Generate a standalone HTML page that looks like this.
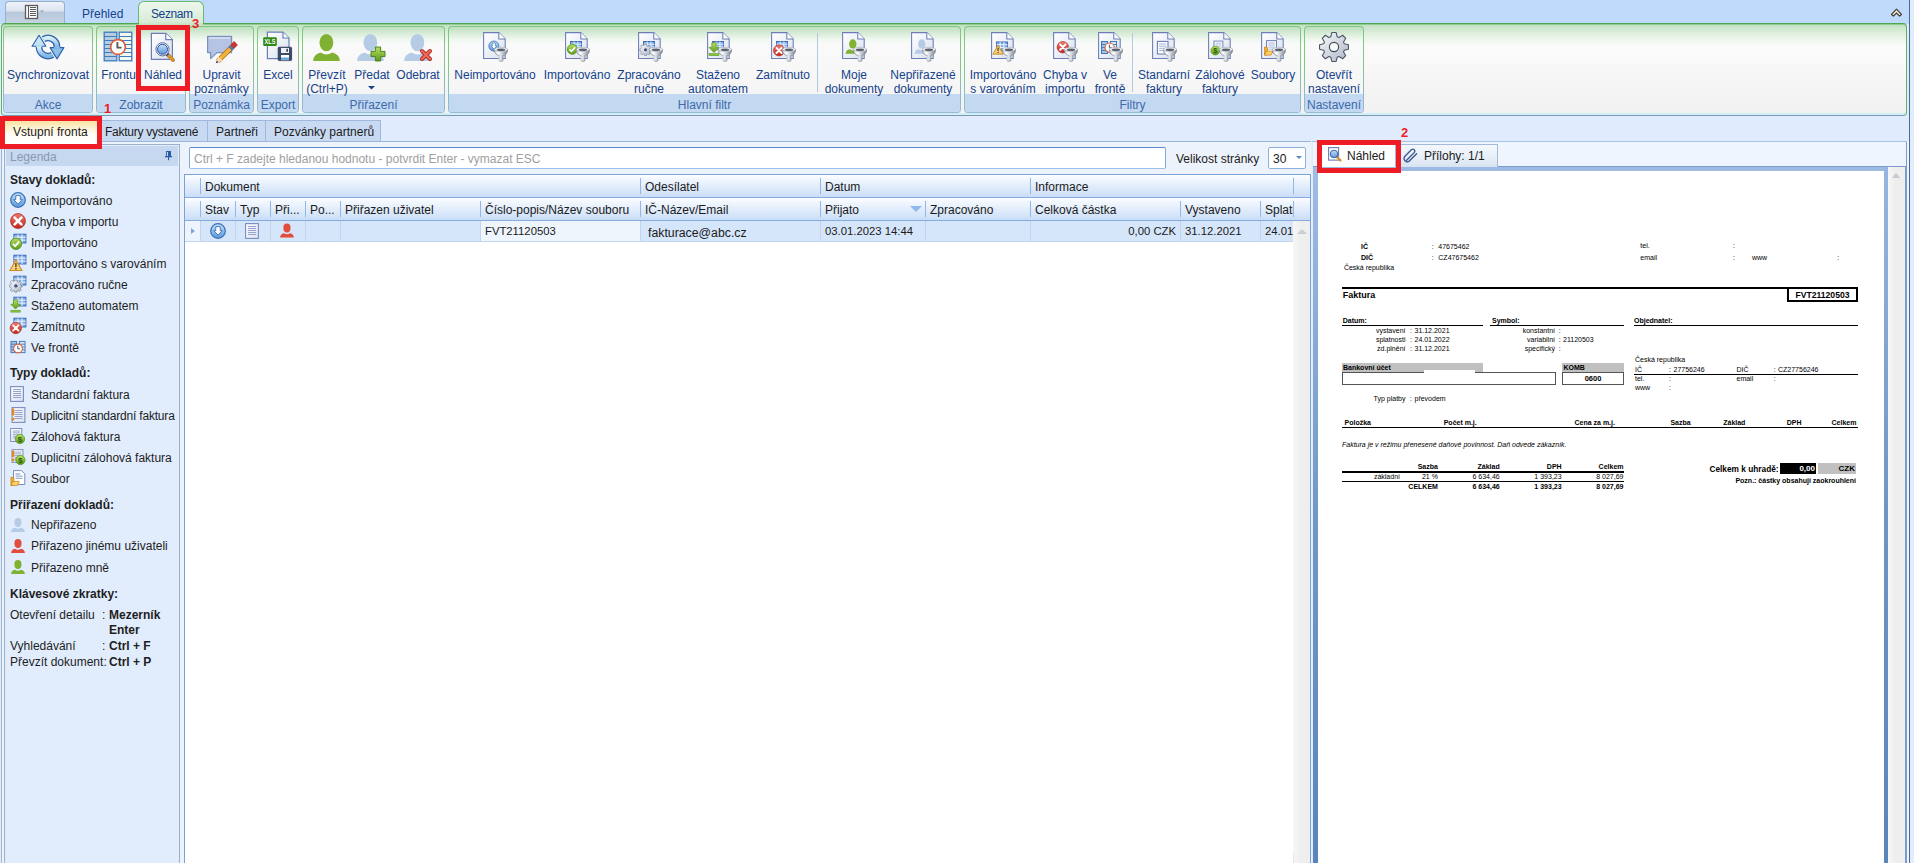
<!DOCTYPE html>
<html><head><meta charset="utf-8">
<style>
*{box-sizing:border-box;}
html,body{margin:0;padding:0;}
body{width:1914px;height:863px;overflow:hidden;position:relative;background:#e0ecfd;font-family:"Liberation Sans",sans-serif;font-size:12px;color:#000;}
.a{position:absolute;}
.t{position:absolute;white-space:nowrap;line-height:14px;}
.b{font-weight:bold;}
.dt{position:absolute;white-space:nowrap;}
/* top */
#topbar{left:0;top:0;width:1914px;height:24px;background:#bfdafa;}
#appbtn{left:5px;top:1px;width:60px;height:23px;border:1px solid #9aaec8;border-bottom:none;border-radius:4px 4px 0 0;background:linear-gradient(#eef2f8 0,#dde5ef 9px,#b7c8dc 10px,#c6d3e3 100%);}
#tab-prehled{left:82px;top:7px;color:#15428b;}
#tab-seznam{left:138px;top:1px;width:66px;height:24px;border:1px solid #6cb86c;border-bottom:none;border-radius:6px 6px 0 0;background:linear-gradient(#eef7ee,#d4ead4);}
#ribbon{left:1px;top:23px;width:1906px;height:93px;border:1px solid #63b063;border-top:1px solid #4fa64f;border-bottom-color:#8298b0;box-shadow:inset 0 -2px 0 #cdeff5,inset 0 1px 0 #8fcc8f;border-radius:4px;background:linear-gradient(#c2e0c2 0,#e6f3e6 12px,#fbfbfb 22px,#f1f1f1 100%);}
.grp{position:absolute;top:26px;height:87px;border-radius:4px;background:linear-gradient(#7ec87e 0,#84c684 45%,#8cbccc 80%,#9ab8d6 100%);overflow:hidden;}
.grp::before{content:"";position:absolute;left:1px;top:1px;right:1px;bottom:1px;border-radius:3px;background:linear-gradient(#bedfbe 0,#d6ebd6 6px,#eef7ee 12px,#fafafa 17px,#f3f3f3 100%);}
.grp .lbl{position:absolute;left:1px;right:1px;bottom:1px;height:18px;background:#c3d8f1;color:#3d6aab;text-align:center;line-height:22px;font-size:12px;border-radius:0 0 3px 3px;}
.rb{position:absolute;color:#15428b;text-align:center;line-height:14px;white-space:nowrap;}
.red{position:absolute;border:5px solid #ee1c25;}
.rednum{position:absolute;color:#ee1c25;font-weight:bold;font-size:13px;line-height:13px;}
</style></head>
<body>
<div class="a" id="topbar"></div>
<div class="a" id="appbtn"></div>
<div class="t" id="tab-prehled">Přehled</div>
<div class="a" id="tab-seznam"></div>
<div class="t" style="left:151px;top:7px;color:#15428b;letter-spacing:-0.4px;">Seznam</div>
<div class="a" id="ribbon"></div>
<div class="a" style="left:139px;top:22px;width:64px;height:3px;background:linear-gradient(#d4ead4,#c4e2c4);"></div>

<div class="grp" style="left:3px;width:90px;"><div class="lbl">Akce</div></div>
<div class="grp" style="left:96px;width:90px;"><div class="lbl">Zobrazit</div></div>
<div class="grp" style="left:189px;width:65px;"><div class="lbl">Poznámka</div></div>
<div class="grp" style="left:257px;width:42px;"><div class="lbl">Export</div></div>
<div class="grp" style="left:302px;width:143px;"><div class="lbl">Přiřazení</div></div>
<div class="grp" style="left:448px;width:513px;"><div class="lbl">Hlavní filtr</div></div>
<div class="grp" style="left:964px;width:337px;"><div class="lbl">Filtry</div></div>
<div class="grp" style="left:1304px;width:60px;"><div class="lbl">Nastavení</div></div>

<div class="a" style="left:817px;top:33px;width:1px;height:59px;background:#b4c8e0;"></div>
<div class="a" style="left:1132px;top:33px;width:1px;height:59px;background:#b4c8e0;"></div>
<!-- button labels -->
<div class="rb" style="left:0px;width:96px;top:68px;">Synchronizovat</div>
<div class="rb" style="left:96px;width:45px;top:68px;">Frontu</div>
<div class="rb" style="left:141px;width:44px;top:68px;">Náhled</div>
<div class="rb" style="left:189px;width:65px;top:68px;">Upravit<br>poznámky</div>
<div class="rb" style="left:257px;width:42px;top:68px;">Excel</div>
<div class="rb" style="left:304px;width:46px;top:68px;">Převzít<br>(Ctrl+P)</div>
<div class="rb" style="left:350px;width:44px;top:68px;">Předat</div>
<div class="rb" style="left:394px;width:48px;top:68px;">Odebrat</div>
<div class="rb" style="left:450px;width:90px;top:68px;">Neimportováno</div>
<div class="rb" style="left:540px;width:74px;top:68px;">Importováno</div>
<div class="rb" style="left:614px;width:70px;top:68px;">Zpracováno<br>ručne</div>
<div class="rb" style="left:684px;width:68px;top:68px;">Staženo<br>automatem</div>
<div class="rb" style="left:752px;width:62px;top:68px;">Zamítnuto</div>
<div class="rb" style="left:820px;width:68px;top:68px;">Moje<br>dokumenty</div>
<div class="rb" style="left:888px;width:70px;top:68px;">Nepřiřazené<br>dokumenty</div>
<div class="rb" style="left:966px;width:74px;top:68px;">Importováno<br>s varováním</div>
<div class="rb" style="left:1040px;width:50px;top:68px;">Chyba v<br>importu</div>
<div class="rb" style="left:1090px;width:40px;top:68px;">Ve<br>frontě</div>
<div class="rb" style="left:1135px;width:58px;top:68px;">Standarní<br>faktury</div>
<div class="rb" style="left:1193px;width:54px;top:68px;">Zálohové<br>faktury</div>
<div class="rb" style="left:1248px;width:50px;top:68px;">Soubory</div>
<div class="rb" style="left:1304px;width:60px;top:68px;">Otevřít<br>nastavení</div>

<!-- doc tabs -->
<div class="a" style="left:1px;top:141px;width:1909px;height:722px;border:1px solid #9db6d6;border-bottom:none;background:#edf3fc;"></div>
<div class="a" style="left:97px;top:120px;width:284px;height:21px;border:1px solid #9fb8dc;border-bottom:none;background:#c8daf1;"></div>
<div class="a" style="left:207px;top:120px;width:1px;height:21px;background:#9fb8dc;"></div>
<div class="a" style="left:265px;top:120px;width:1px;height:21px;background:#9fb8dc;"></div>
<div class="a" style="left:5px;top:121px;width:92px;height:23px;background:linear-gradient(#fbe2a0 0,#fdf2d2 7px,#fffdf6 14px,#ffffff 100%);"></div>
<div class="t" style="left:13px;top:125px;color:#1b1b1b;">Vstupní fronta</div>
<div class="t" style="left:105px;top:125px;color:#1b1b1b;letter-spacing:-0.25px;">Faktury vystavené</div>
<div class="t" style="left:216px;top:125px;color:#1b1b1b;">Partneři</div>
<div class="t" style="left:274px;top:125px;color:#1b1b1b;">Pozvánky partnerů</div>

<!-- left legend panel -->
<div class="a" style="left:4px;top:144px;width:176px;height:719px;border:1px solid #9db0c8;border-bottom:none;background:#e1edfd;"></div>
<div class="a" style="left:6px;top:146px;width:172px;height:20px;background:#c6d8ef;"></div>
<div class="t" style="left:10px;top:150px;color:#8797b0;">Legenda</div>
<div id="legend" style="position:absolute;left:0;top:0;color:#1e1e1e;">
<div class="t b" style="left:10px;top:173px;">Stavy dokladů:</div>
<div class="t" style="left:31px;top:194px;">Neimportováno</div>
<div class="t" style="left:31px;top:215px;">Chyba v importu</div>
<div class="t" style="left:31px;top:236px;">Importováno</div>
<div class="t" style="left:31px;top:257px;">Importováno s varováním</div>
<div class="t" style="left:31px;top:278px;">Zpracováno ručne</div>
<div class="t" style="left:31px;top:299px;">Staženo automatem</div>
<div class="t" style="left:31px;top:320px;">Zamítnuto</div>
<div class="t" style="left:31px;top:341px;">Ve frontě</div>
<div class="t b" style="left:10px;top:366px;">Typy dokladů:</div>
<div class="t" style="left:31px;top:388px;">Standardní faktura</div>
<div class="t" style="left:31px;top:409px;letter-spacing:-0.2px;">Duplicitní standardní faktura</div>
<div class="t" style="left:31px;top:430px;">Zálohová faktura</div>
<div class="t" style="left:31px;top:451px;">Duplicitní zálohová faktura</div>
<div class="t" style="left:31px;top:472px;">Soubor</div>
<div class="t b" style="left:10px;top:498px;">Přiřazení dokladů:</div>
<div class="t" style="left:31px;top:518px;">Nepřiřazeno</div>
<div class="t" style="left:31px;top:539px;">Přiřazeno jinému uživateli</div>
<div class="t" style="left:31px;top:561px;">Přiřazeno mně</div>
<div class="t b" style="left:10px;top:587px;">Klávesové zkratky:</div>
<div class="t" style="left:10px;top:608px;">Otevření detailu</div>
<div class="t" style="left:102px;top:608px;">:</div>
<div class="t b" style="left:109px;top:608px;">Mezerník</div>
<div class="t b" style="left:109px;top:623px;">Enter</div>
<div class="t" style="left:10px;top:639px;">Vyhledávání</div>
<div class="t" style="left:102px;top:639px;">:</div>
<div class="t b" style="left:109px;top:639px;">Ctrl + F</div>
<div class="t" style="left:10px;top:655px;">Převzít dokument:</div>
<div class="t b" style="left:109px;top:655px;">Ctrl + P</div>
</div>

<!-- grid -->
<div class="a" style="left:184px;top:174px;width:1127px;height:689px;border:1px solid #7ba2d7;border-bottom:none;background:#fff;"></div>

<div class="a" style="left:185px;top:175px;width:1125px;height:45px;background:linear-gradient(#fdfeff 0,#edf4fd 6px,#dce9fa 14px,#cadef8 22px,#fdfeff 23px,#edf4fd 29px,#dce9fa 37px,#c9ddf8 45px);"></div>
<div class="a" style="left:185px;top:197px;width:1125px;height:1px;background:#86abe0;"></div>
<div class="a" style="left:185px;top:220px;width:1125px;height:1px;background:#86abe0;"></div>
<div class="a" style="left:200px;top:178px;width:1px;height:16px;background:#8fb7ec;"></div>
<div class="a" style="left:640px;top:178px;width:1px;height:16px;background:#8fb7ec;"></div>
<div class="a" style="left:820px;top:178px;width:1px;height:16px;background:#8fb7ec;"></div>
<div class="a" style="left:1030px;top:178px;width:1px;height:16px;background:#8fb7ec;"></div>
<div class="a" style="left:1293px;top:178px;width:1px;height:16px;background:#8fb7ec;"></div>
<div class="a" style="left:200px;top:201px;width:1px;height:16px;background:#8fb7ec;"></div>
<div class="a" style="left:235px;top:201px;width:1px;height:16px;background:#8fb7ec;"></div>
<div class="a" style="left:270px;top:201px;width:1px;height:16px;background:#8fb7ec;"></div>
<div class="a" style="left:305px;top:201px;width:1px;height:16px;background:#8fb7ec;"></div>
<div class="a" style="left:340px;top:201px;width:1px;height:16px;background:#8fb7ec;"></div>
<div class="a" style="left:480px;top:201px;width:1px;height:16px;background:#8fb7ec;"></div>
<div class="a" style="left:640px;top:201px;width:1px;height:16px;background:#8fb7ec;"></div>
<div class="a" style="left:820px;top:201px;width:1px;height:16px;background:#8fb7ec;"></div>
<div class="a" style="left:925px;top:201px;width:1px;height:16px;background:#8fb7ec;"></div>
<div class="a" style="left:1030px;top:201px;width:1px;height:16px;background:#8fb7ec;"></div>
<div class="a" style="left:1180px;top:201px;width:1px;height:16px;background:#8fb7ec;"></div>
<div class="a" style="left:1260px;top:201px;width:1px;height:16px;background:#8fb7ec;"></div>
<div class="a" style="left:1293px;top:201px;width:1px;height:16px;background:#8fb7ec;"></div>
<div class="a" style="left:185px;top:221px;width:15px;height:20px;background:#eef4fd;"></div>
<div class="a" style="left:200px;top:221px;width:1093px;height:20px;background:#d6e6fa;"></div>
<div class="a" style="left:480px;top:221px;width:160px;height:20px;background:#eef5fd;"></div>
<div class="a" style="left:185px;top:241px;width:1108px;height:1px;background:#c2d6ef;"></div>
<div class="a" style="left:200px;top:221px;width:1px;height:20px;background:#c3d5ec;"></div>
<div class="a" style="left:235px;top:221px;width:1px;height:20px;background:#c3d5ec;"></div>
<div class="a" style="left:270px;top:221px;width:1px;height:20px;background:#c3d5ec;"></div>
<div class="a" style="left:305px;top:221px;width:1px;height:20px;background:#c3d5ec;"></div>
<div class="a" style="left:340px;top:221px;width:1px;height:20px;background:#c3d5ec;"></div>
<div class="a" style="left:480px;top:221px;width:1px;height:20px;background:#c3d5ec;"></div>
<div class="a" style="left:640px;top:221px;width:1px;height:20px;background:#c3d5ec;"></div>
<div class="a" style="left:820px;top:221px;width:1px;height:20px;background:#c3d5ec;"></div>
<div class="a" style="left:925px;top:221px;width:1px;height:20px;background:#c3d5ec;"></div>
<div class="a" style="left:1030px;top:221px;width:1px;height:20px;background:#c3d5ec;"></div>
<div class="a" style="left:1180px;top:221px;width:1px;height:20px;background:#c3d5ec;"></div>
<div class="a" style="left:1260px;top:221px;width:1px;height:20px;background:#c3d5ec;"></div>
<div class="a" style="left:191px;top:228px;width:0;height:0;border-left:4px solid #80a6d7;border-top:3.5px solid transparent;border-bottom:3.5px solid transparent;"></div>
<div class="t" style="left:205px;top:180px;color:#1b1b1b;">Dokument</div>
<div class="t" style="left:645px;top:180px;color:#1b1b1b;">Odesílatel</div>
<div class="t" style="left:825px;top:180px;color:#1b1b1b;">Datum</div>
<div class="t" style="left:1035px;top:180px;color:#1b1b1b;">Informace</div>
<div class="t" style="left:205px;top:203px;color:#1b1b1b;">Stav</div>
<div class="t" style="left:240px;top:203px;color:#1b1b1b;">Typ</div>
<div class="t" style="left:275px;top:203px;color:#1b1b1b;">Při...</div>
<div class="t" style="left:310px;top:203px;color:#1b1b1b;">Po...</div>
<div class="t" style="left:345px;top:203px;color:#1b1b1b;">Přiřazen uživatel</div>
<div class="t" style="left:485px;top:203px;color:#1b1b1b;">Číslo-popis/Název souboru</div>
<div class="t" style="left:645px;top:203px;color:#1b1b1b;">IČ-Název/Email</div>
<div class="t" style="left:825px;top:203px;color:#1b1b1b;">Přijato</div>
<div class="t" style="left:930px;top:203px;color:#1b1b1b;">Zpracováno</div>
<div class="t" style="left:1035px;top:203px;color:#1b1b1b;">Celková částka</div>
<div class="t" style="left:1185px;top:203px;color:#1b1b1b;">Vystaveno</div>
<div class="a" style="left:1261px;top:198px;width:32px;height:22px;overflow:hidden;"><div class="t" style="left:4px;top:5px;color:#1b1b1b;">Splatnost</div></div>
<div class="a" style="left:910px;top:206px;width:0;height:0;border-top:6px solid #8fb8ee;border-left:6px solid transparent;border-right:6px solid transparent;"></div>
<div class="t" style="left:485px;top:224px;color:#1b1b1b;font-size:11.3px;">FVT21120503</div>
<div class="t" style="left:648px;top:226px;color:#1b1b1b;font-size:12.3px;">fakturace@abc.cz</div>
<div class="t" style="left:825px;top:224px;color:#1b1b1b;font-size:11.3px;">03.01.2023 14:44</div>
<div class="t" style="left:1030px;top:224px;width:146px;text-align:right;color:#1b1b1b;font-size:11.3px;">0,00 CZK</div>
<div class="t" style="left:1185px;top:224px;color:#1b1b1b;font-size:11.3px;">31.12.2021</div>
<div class="a" style="left:1261px;top:221px;width:32px;height:20px;overflow:hidden;"><div class="t" style="left:4px;top:3px;color:#1b1b1b;font-size:11.3px;">24.01.2022</div></div>
<div class="a" style="left:1293px;top:221px;width:17px;height:642px;background:linear-gradient(90deg,#f7f7f7,#efefef 40%,#eeeeee);"></div>
<div class="a" style="left:1297px;top:229px;width:0;height:0;border-bottom:5px solid #c9ced6;border-left:5px solid transparent;border-right:5px solid transparent;"></div>
<div class="a" style="left:189px;top:147px;width:977px;height:22px;border:1px solid #7fa7db;border-top-color:#5a88c8;border-bottom-color:#9cc0ec;border-radius:2px;background:#fff;"></div>
<div class="t" style="left:194px;top:152px;color:#a0a0a0;">Ctrl + F zadejte hledanou hodnotu - potvrdit Enter - vymazat ESC</div>
<div class="t" style="left:1176px;top:152px;color:#1b1b1b;">Velikost stránky</div>
<div class="a" style="left:1268px;top:147px;width:38px;height:22px;border:1px solid #8db0de;border-radius:2px;background:#fff;"></div>
<div class="t" style="left:1273px;top:152px;color:#1b1b1b;">30</div>
<div class="a" style="left:1296px;top:156px;width:0;height:0;border-top:3px solid #5b87c6;border-left:3px solid transparent;border-right:3px solid transparent;"></div>
<div class="a" style="left:1293px;top:853px;width:1px;height:10px;background:#e4e6ea;"></div>
<!-- right panel -->
<div class="a" style="left:1311px;top:141px;width:2px;height:722px;background:#e6f0fb;"></div>
<div class="a" style="left:1312px;top:141px;width:598px;height:722px;border-top:1px solid #a9c2e4;background:#e0ecfd;"></div>
<div class="a" style="left:1313px;top:142px;width:594px;height:25px;background:#eef5fe;border-right:1px solid #7b9ccb;border-bottom:1px solid #7b9ccb;"></div>
<div class="a" style="left:1907px;top:141px;width:2px;height:722px;background:#eef5fe;"></div>
<div class="a" style="left:1909px;top:0px;width:1px;height:863px;background:#4a6b99;"></div>
<div class="a" style="left:1910px;top:0px;width:4px;height:863px;background:#e1edfc;"></div>
<div class="a" style="left:1395px;top:144px;width:103px;height:23px;border:1px solid #a3bad8;border-bottom:none;background:linear-gradient(#f4f8fd 0,#e9f0f9 50%,#d8e3f1 100%);"></div>
<div class="a" style="left:1322px;top:145px;width:73px;height:23px;background:#fff;"></div>
<div class="t" style="left:1347px;top:149px;color:#1b1b1b;">Náhled</div>
<div class="t" style="left:1424px;top:149px;color:#1b1b1b;">Přílohy: 1/1</div>
<div class="a" style="left:1313px;top:167px;width:593px;height:4px;background:#9dbbe2;"></div>
<div class="a" style="left:1313px;top:167px;width:5px;height:696px;background:linear-gradient(#a0bde2,#7298c4 50%,#5a84bc);"></div>
<div class="a" style="left:1884px;top:167px;width:4px;height:696px;background:linear-gradient(#95b6e0,#6f95c6 50%,#5a84bc);"></div>
<div class="a" style="left:1318px;top:171px;width:566px;height:692px;background:#fff;"></div>
<div class="a" style="left:1888px;top:167px;width:17px;height:696px;background:linear-gradient(90deg,#f7f7f7,#eeeeee 40%);"></div>
<div class="a" style="left:1905px;top:167px;width:2px;height:696px;background:#7b9ccb;"></div>
<div class="a" style="left:1892px;top:173px;width:0;height:0;border-bottom:5px solid #c5c9d1;border-left:4.5px solid transparent;border-right:4.5px solid transparent;"></div>
<!--DOC-->
<div class="dt" style="font-size:7px;line-height:7px;top:242.87px;color:#000;font-weight:bold;left:1361px;">IČ</div>
<div class="dt" style="font-size:7px;line-height:7px;top:242.87px;color:#000;left:1431.7px;">:</div>
<div class="dt" style="font-size:7px;line-height:7px;top:242.87px;color:#000;left:1438.3px;">47675462</div>
<div class="dt" style="font-size:7px;line-height:7px;top:253.87px;color:#000;font-weight:bold;left:1361px;">DIČ</div>
<div class="dt" style="font-size:7px;line-height:7px;top:253.87px;color:#000;left:1431.7px;">:</div>
<div class="dt" style="font-size:7px;line-height:7px;top:253.87px;color:#000;left:1438.3px;">CZ47675462</div>
<div class="dt" style="font-size:7px;line-height:7px;top:263.67px;color:#000;left:1343.9px;">Česká republika</div>
<div class="dt" style="font-size:7px;line-height:7px;top:242.47px;color:#000;left:1640.3px;">tel.</div>
<div class="dt" style="font-size:7px;line-height:7px;top:242.47px;color:#000;left:1733px;">:</div>
<div class="dt" style="font-size:7px;line-height:7px;top:253.77px;color:#000;left:1640.3px;">email</div>
<div class="dt" style="font-size:7px;line-height:7px;top:253.77px;color:#000;left:1733px;">:</div>
<div class="dt" style="font-size:7px;line-height:7px;top:253.77px;color:#000;left:1751.9px;">www</div>
<div class="dt" style="font-size:7px;line-height:7px;top:253.77px;color:#000;left:1837.3px;">:</div>
<div class="a" style="left:1342px;top:287px;width:516px;height:2px;background:#000;"></div>
<div class="dt" style="font-size:9px;line-height:9px;top:290.98px;color:#000;font-weight:bold;left:1342.7px;">Faktura</div>
<div class="a" style="left:1787px;top:287px;width:71px;height:15px;background:#fff;border:2px solid #000;"></div>
<div class="dt" style="font-size:8.6px;line-height:8.6px;top:290.72px;color:#000;font-weight:bold;left:1787px;width:71px;text-align:center;">FVT21120503</div>
<div class="dt" style="font-size:7px;line-height:7px;top:316.67px;color:#000;font-weight:bold;left:1342.7px;">Datum:</div>
<div class="a" style="left:1342px;top:325px;width:141px;height:1px;background:#000;"></div>
<div class="dt" style="font-size:7px;line-height:7px;top:316.67px;color:#000;font-weight:bold;left:1492px;">Symbol:</div>
<div class="a" style="left:1490px;top:325px;width:134px;height:1px;background:#000;"></div>
<div class="dt" style="font-size:7px;line-height:7px;top:316.67px;color:#000;font-weight:bold;left:1634px;">Objednatel:</div>
<div class="a" style="left:1634px;top:325px;width:224px;height:1px;background:#000;"></div>
<div class="dt" style="font-size:7px;line-height:7px;top:326.67px;color:#000;right:508.50px;">vystavení</div>
<div class="dt" style="font-size:7px;line-height:7px;top:326.67px;color:#000;left:1410px;">:</div>
<div class="dt" style="font-size:7px;line-height:7px;top:326.67px;color:#000;left:1414.5px;">31.12.2021</div>
<div class="dt" style="font-size:7px;line-height:7px;top:335.87px;color:#000;right:508.50px;">splatnosti</div>
<div class="dt" style="font-size:7px;line-height:7px;top:335.87px;color:#000;left:1410px;">:</div>
<div class="dt" style="font-size:7px;line-height:7px;top:335.87px;color:#000;left:1414.5px;">24.01.2022</div>
<div class="dt" style="font-size:7px;line-height:7px;top:344.57px;color:#000;right:508.50px;">zd.plnění</div>
<div class="dt" style="font-size:7px;line-height:7px;top:344.57px;color:#000;left:1410px;">:</div>
<div class="dt" style="font-size:7px;line-height:7px;top:344.57px;color:#000;left:1414.5px;">31.12.2021</div>
<div class="dt" style="font-size:7px;line-height:7px;top:326.67px;color:#000;right:359.00px;">konstantní</div>
<div class="dt" style="font-size:7px;line-height:7px;top:326.67px;color:#000;left:1558.8px;">:</div>
<div class="dt" style="font-size:7px;line-height:7px;top:326.67px;color:#000;left:1563px;"></div>
<div class="dt" style="font-size:7px;line-height:7px;top:335.87px;color:#000;right:359.00px;">variabilní</div>
<div class="dt" style="font-size:7px;line-height:7px;top:335.87px;color:#000;left:1558.8px;">:</div>
<div class="dt" style="font-size:7px;line-height:7px;top:335.87px;color:#000;left:1563px;">21120503</div>
<div class="dt" style="font-size:7px;line-height:7px;top:344.57px;color:#000;right:359.00px;">specifický</div>
<div class="dt" style="font-size:7px;line-height:7px;top:344.57px;color:#000;left:1558.8px;">:</div>
<div class="dt" style="font-size:7px;line-height:7px;top:344.57px;color:#000;left:1563px;"></div>
<div class="a" style="left:1342px;top:363px;width:141px;height:9px;background:#c0c0c0;"></div>
<div class="dt" style="font-size:7px;line-height:7px;top:363.97px;color:#000;font-weight:bold;left:1343px;">Bankovní účet</div>
<div class="a" style="left:1342px;top:372px;width:214px;height:13px;background:#fff;border:1px solid #555;"></div>
<div class="a" style="left:1424px;top:370px;width:51px;height:3px;background:#fff;"></div>
<div class="a" style="left:1562px;top:363px;width:62px;height:9px;background:#c0c0c0;"></div>
<div class="dt" style="font-size:7px;line-height:7px;top:363.97px;color:#000;font-weight:bold;left:1563.5px;">KOMB</div>
<div class="a" style="left:1562px;top:372px;width:62px;height:13px;background:#fff;border:1px solid #555;"></div>
<div class="dt" style="font-size:7.5px;line-height:7.5px;top:374.65px;color:#000;font-weight:bold;left:1562px;width:62px;text-align:center;">0600</div>
<div class="dt" style="font-size:7px;line-height:7px;top:355.67px;color:#000;left:1635px;">Česká republika</div>
<div class="dt" style="font-size:7px;line-height:7px;top:365.87px;color:#000;left:1635px;">IČ</div>
<div class="dt" style="font-size:7px;line-height:7px;top:365.87px;color:#000;left:1669px;">:</div>
<div class="dt" style="font-size:7px;line-height:7px;top:365.87px;color:#000;left:1673.5px;">27756246</div>
<div class="dt" style="font-size:7px;line-height:7px;top:365.87px;color:#000;left:1736.5px;">DIČ</div>
<div class="dt" style="font-size:7px;line-height:7px;top:365.87px;color:#000;left:1773.7px;">:</div>
<div class="dt" style="font-size:7px;line-height:7px;top:365.87px;color:#000;left:1778px;">CZ27756246</div>
<div class="a" style="left:1634px;top:374px;width:224px;height:1px;background:#000;"></div>
<div class="dt" style="font-size:7px;line-height:7px;top:374.87px;color:#000;left:1635px;">tel.</div>
<div class="dt" style="font-size:7px;line-height:7px;top:374.87px;color:#000;left:1669px;">:</div>
<div class="dt" style="font-size:7px;line-height:7px;top:374.87px;color:#000;left:1736.5px;">email</div>
<div class="dt" style="font-size:7px;line-height:7px;top:374.87px;color:#000;left:1773.7px;">:</div>
<div class="dt" style="font-size:7px;line-height:7px;top:383.77px;color:#000;left:1635px;">www</div>
<div class="dt" style="font-size:7px;line-height:7px;top:383.77px;color:#000;left:1669px;">:</div>
<div class="dt" style="font-size:7px;line-height:7px;top:394.67px;color:#000;right:508.50px;">Typ platby</div>
<div class="dt" style="font-size:7px;line-height:7px;top:394.67px;color:#000;left:1410px;">:</div>
<div class="dt" style="font-size:7px;line-height:7px;top:394.67px;color:#000;left:1414.5px;">převodem</div>
<div class="dt" style="font-size:7px;line-height:7px;top:418.77px;color:#000;font-weight:bold;left:1344.5px;">Položka</div>
<div class="dt" style="font-size:7px;line-height:7px;top:418.77px;color:#000;font-weight:bold;left:1443.7px;">Počet m.j.</div>
<div class="dt" style="font-size:7px;line-height:7px;top:418.77px;color:#000;font-weight:bold;left:1574.5px;">Cena za m.j.</div>
<div class="dt" style="font-size:7px;line-height:7px;top:418.77px;color:#000;font-weight:bold;right:223.40px;">Sazba</div>
<div class="dt" style="font-size:7px;line-height:7px;top:418.77px;color:#000;font-weight:bold;right:168.60px;">Základ</div>
<div class="dt" style="font-size:7px;line-height:7px;top:418.77px;color:#000;font-weight:bold;right:112.50px;">DPH</div>
<div class="dt" style="font-size:7px;line-height:7px;top:418.77px;color:#000;font-weight:bold;right:57.60px;">Celkem</div>
<div class="a" style="left:1342px;top:427px;width:516px;height:1px;background:#000;"></div>
<div class="dt" style="font-size:7px;line-height:7px;top:440.57px;color:#000;font-style:italic;left:1342px;">Faktura je v režimu přenesené daňové povinnost. Daň odvede zákazník.</div>
<div class="dt" style="font-size:7px;line-height:7px;top:462.57px;color:#000;font-weight:bold;right:476.10px;">Sazba</div>
<div class="dt" style="font-size:7px;line-height:7px;top:462.57px;color:#000;font-weight:bold;right:414.30px;">Základ</div>
<div class="dt" style="font-size:7px;line-height:7px;top:462.57px;color:#000;font-weight:bold;right:352.40px;">DPH</div>
<div class="dt" style="font-size:7px;line-height:7px;top:462.57px;color:#000;font-weight:bold;right:290.50px;">Celkem</div>
<div class="a" style="left:1342px;top:471px;width:282px;height:2px;background:#000;"></div>
<div class="dt" style="font-size:7px;line-height:7px;top:472.67px;color:#000;right:514.00px;">základní</div>
<div class="dt" style="font-size:7px;line-height:7px;top:472.67px;color:#000;right:476.10px;">21 %</div>
<div class="dt" style="font-size:7px;line-height:7px;top:472.67px;color:#000;right:414.30px;">6 634,46</div>
<div class="dt" style="font-size:7px;line-height:7px;top:472.67px;color:#000;right:352.40px;">1 393,23</div>
<div class="dt" style="font-size:7px;line-height:7px;top:472.67px;color:#000;right:290.50px;">8 027,69</div>
<div class="a" style="left:1342px;top:481px;width:282px;height:1px;background:#000;"></div>
<div class="dt" style="font-size:7px;line-height:7px;top:482.67px;color:#000;font-weight:bold;right:476.10px;">CELKEM</div>
<div class="dt" style="font-size:7px;line-height:7px;top:482.67px;color:#000;font-weight:bold;right:414.30px;">6 634,46</div>
<div class="dt" style="font-size:7px;line-height:7px;top:482.67px;color:#000;font-weight:bold;right:352.40px;">1 393,23</div>
<div class="dt" style="font-size:7px;line-height:7px;top:482.67px;color:#000;font-weight:bold;right:290.50px;">8 027,69</div>
<div class="dt" style="font-size:8.3px;line-height:8.3px;top:464.77px;color:#000;font-weight:bold;right:135.40px;">Celkem k uhradě:</div>
<div class="a" style="left:1780px;top:463px;width:36px;height:11px;background:#000;"></div>
<div class="dt" style="font-size:8px;line-height:8px;top:464.73px;color:#fff;font-weight:bold;right:99.00px;">0,00</div>
<div class="a" style="left:1818px;top:463px;width:38px;height:11px;background:#c0c0c0;"></div>
<div class="dt" style="font-size:8px;line-height:8px;top:464.73px;color:#000;font-weight:bold;right:59.00px;">CZK</div>
<div class="dt" style="font-size:7px;line-height:7px;top:476.87px;color:#000;font-weight:bold;right:58.00px;">Pozn.: částky obsahují zaokrouhlení</div>
<!--/DOC-->
<!--ICONS-->

<svg width="0" height="0" style="position:absolute">
<defs>
<linearGradient id="gDoc" x1="0" y1="0" x2="1" y2="1"><stop offset="0" stop-color="#ffffff"/><stop offset="1" stop-color="#d9e0ee"/></linearGradient>
<linearGradient id="gFun" x1="0" y1="0" x2="1" y2="0"><stop offset="0" stop-color="#c9ced6"/><stop offset="0.3" stop-color="#ffffff"/><stop offset="1" stop-color="#7d8591"/></linearGradient>
<linearGradient id="gBlue" x1="0" y1="0" x2="0" y2="1"><stop offset="0" stop-color="#c4e2fa"/><stop offset="1" stop-color="#5896d8"/></linearGradient>
<linearGradient id="gRed" x1="0" y1="0" x2="0" y2="1"><stop offset="0" stop-color="#f07a6e"/><stop offset="1" stop-color="#c0271e"/></linearGradient>
<linearGradient id="gGreen" x1="0" y1="0" x2="0" y2="1"><stop offset="0" stop-color="#b8e060"/><stop offset="1" stop-color="#5a9a1a"/></linearGradient>
<linearGradient id="gGear" x1="0" y1="0" x2="1" y2="1"><stop offset="0" stop-color="#fafbfc"/><stop offset="1" stop-color="#aeb6c6"/></linearGradient>
<linearGradient id="gSync" x1="0" y1="0" x2="0" y2="1"><stop offset="0" stop-color="#d8f0fb"/><stop offset="1" stop-color="#7db5e3"/></linearGradient>
<symbol id="doc" viewBox="0 0 23 27" overflow="visible"><path d="M0.6,0.6 H15.8 L22.2,7 V26.4 H0.6 Z" fill="url(#gDoc)" stroke="#6b7cb6" stroke-width="1.05"/><path d="M15.8,0.6 V7 H22.2" fill="#fff" stroke="#6b7cb6" stroke-width="1.05"/></symbol>
<symbol id="funnel" viewBox="0 0 14 15" overflow="visible"><path d="M0.4,2.4 C0.4,6.6 3,8 5.1,8.5 V13.8 Q7,14.9 8.9,13.8 V8.5 C11,8 13.6,6.6 13.6,2.4 Z" fill="url(#gFun)" stroke="#7a828e" stroke-width="0.7"/><ellipse cx="7" cy="2.4" rx="6.6" ry="2.1" fill="#f4f5f7" stroke="#a0a6b0" stroke-width="0.6"/><ellipse cx="7" cy="2.7" rx="4.3" ry="1.3" fill="#5a626e"/><path d="M5.1,9 V13.8" stroke="#f8f8f8" stroke-width="0.8"/></symbol>
<symbol id="grid" viewBox="0 0 12 9" overflow="visible"><rect x="0.5" y="0.5" width="11" height="8" fill="#7eaee6" stroke="#3e6cb8" stroke-width="1"/><path d="M4.2,0.5 V8.5 M7.9,0.5 V8.5 M0.5,3.2 H11.5 M0.5,5.9 H11.5" stroke="#f4f8ff" stroke-width="0.9"/></symbol>
<symbol id="bcirc" viewBox="0 0 16 16" overflow="visible"><circle cx="8" cy="8" r="7.3" fill="url(#gBlue)" stroke="#3a6fb8" stroke-width="1.2"/><path d="M5.8,3.6 H10.2 V7.6 H12.2 L8,12.2 L3.8,7.6 H5.8 Z" fill="#fff" stroke="#3a6fb8" stroke-width="0.9"/></symbol>
<symbol id="rcirc" viewBox="0 0 16 16" overflow="visible"><circle cx="8" cy="8" r="7.4" fill="url(#gRed)" stroke="#a82a20" stroke-width="0.8"/><path d="M4.6,4.6 L11.4,11.4 M11.4,4.6 L4.6,11.4" stroke="#fff" stroke-width="2.6" stroke-linecap="round"/></symbol>
<symbol id="gcheck" viewBox="0 0 12 12" overflow="visible"><circle cx="6" cy="6" r="5.5" fill="url(#gGreen)" stroke="#4a8a18" stroke-width="0.8"/><path d="M3,6 L5.2,8.2 L9,3.8" fill="none" stroke="#fff" stroke-width="1.8"/></symbol>
<symbol id="warn" viewBox="0 0 12 11" overflow="visible"><path d="M6,0.5 L11.6,10.4 H0.4 Z" fill="#f7d27a" stroke="#d08a20" stroke-width="1"/><path d="M6,3.4 V7" stroke="#5a4a30" stroke-width="1.4"/><circle cx="6" cy="8.6" r="0.8" fill="#5a4a30"/></symbol>
<symbol id="sgear" viewBox="0 0 12 12" overflow="visible"><path d="M5,0.4 H7 L7.3,2 L8.6,2.6 L10,1.7 L11.3,3 L10.4,4.4 L11,5.7 L12,6 V7 L10.8,7.4 L10.3,8.6 L11,10 L9.7,11.3 L8.3,10.4 L7.1,10.9 L7,12 H5 L4.7,10.9 L3.4,10.4 L2,11.3 L0.7,10 L1.6,8.6 L1.1,7.4 L0,7 V5 L1.1,4.6 L1.6,3.4 L0.7,2 L2,0.7 L3.4,1.6 L4.7,1.1 Z" fill="url(#gGear)" stroke="#6e7686" stroke-width="0.6"/><circle cx="6" cy="6" r="1.6" fill="#3a4a88"/></symbol>
<symbol id="garrow" viewBox="0 0 12 15" overflow="visible"><path d="M3.6,0.5 H8.4 V5.5 H11.5 L6,11 L0.5,5.5 H3.6 Z" fill="url(#gGreen)" stroke="#5a9a1a" stroke-width="0.8"/><rect x="0.6" y="12.3" width="10.8" height="2.2" fill="#8ac03a" stroke="#5a9a1a" stroke-width="0.6"/></symbol>
<symbol id="person" viewBox="0 0 27 27" overflow="visible"><ellipse cx="13.4" cy="8.6" rx="6.9" ry="8.6"/><path d="M0.2,27 Q0.4,20.2 7.6,18.6 Q13.4,22.6 19.2,18.6 Q26.6,20.2 26.8,27 Z"/></symbol>
<symbol id="clock" viewBox="0 0 16 16" overflow="visible"><circle cx="8" cy="8" r="7" fill="#fff" stroke="#d9603b" stroke-width="1.6"/><path d="M7.6,3.6 V8.4 H11.4" fill="none" stroke="#555" stroke-width="1.8"/></symbol>
<symbol id="innerdoc" viewBox="0 0 12 14" overflow="visible"><rect x="0.6" y="0.6" width="10.8" height="12.8" fill="#fff" stroke="#6b7cb6" stroke-width="1.1"/><path d="M2.4,3.2 H9.6 M2.4,5.4 H9.6 M2.4,7.6 H9.6 M2.4,9.8 H9.6" stroke="#9fb0d8" stroke-width="1"/></symbol>
<symbol id="dollar" viewBox="0 0 10 10" overflow="visible"><circle cx="5" cy="5" r="4.7" fill="url(#gGreen)" stroke="#4a8a18" stroke-width="0.6"/><text x="5" y="8" font-family="Liberation Sans" font-weight="bold" font-size="8" text-anchor="middle" fill="#2e5a10">$</text></symbol>
<symbol id="folder" viewBox="0 0 9 9" overflow="visible"><path d="M0.5,0.5 H3 L3.5,1.5 V8.5 H0.5 Z" fill="#f0b030" stroke="#c07810" stroke-width="0.6"/><path d="M0.5,8.5 L2.5,4.5 H8.8 L7,8.5 Z" fill="#fdd060" stroke="#c07810" stroke-width="0.6"/></symbol>
<symbol id="gridtbl" viewBox="0 0 16 13" overflow="visible"><rect x="0.5" y="0.5" width="6" height="12" fill="#a9c4e0" stroke="#3a78c0" stroke-width="1"/><rect x="9.5" y="0.5" width="6" height="12" fill="#dce8f4" stroke="#3a78c0" stroke-width="1"/><path d="M0.5,3.5 H6.5 M0.5,6.5 H6.5 M0.5,9.5 H6.5 M9.5,3.5 H15.5 M9.5,6.5 H15.5 M9.5,9.5 H15.5" stroke="#3a78c0" stroke-width="0.9"/></symbol>
<symbol id="lines" viewBox="0 0 14 16" overflow="visible"><rect x="0.6" y="0.6" width="12.8" height="14.8" fill="url(#gDoc)" stroke="#7b8cc0" stroke-width="1.1"/><path d="M3,3.5 H11 M3,5.5 H11 M3,7.5 H11 M3,9.5 H11 M3,11.5 H11" stroke="#8c9cc8" stroke-width="0.9"/></symbol>
</defs></svg>
<svg class="a" style="left:30px;top:32px;overflow:visible" width="36" height="30" viewBox="0 0 36 30">
<path d="M9,15 A9,9 0 0 0 22.5,22.8" fill="none" stroke="#2e5fae" stroke-width="6.6"/>
<path d="M9,15 A9,9 0 0 0 22.5,22.8" fill="none" stroke="url(#gSync)" stroke-width="4.2"/>
<path d="M13.5,7.2 A9,9 0 0 1 27,15" fill="none" stroke="#2e5fae" stroke-width="6.6"/>
<path d="M13.5,7.2 A9,9 0 0 1 27,15" fill="none" stroke="url(#gSync)" stroke-width="4.2"/>
<path d="M9,3.3 L15.9,14.3 H2.1 Z" fill="#c4e4f6" stroke="#2e5fae" stroke-width="1.1" stroke-linejoin="round"/>
<path d="M27,26.9 L20.1,15.6 H33.9 Z" fill="#8cc0e8" stroke="#2e5fae" stroke-width="1.1" stroke-linejoin="round"/>
<path d="M6.2,14.3 H11.8" stroke="#c4e4f6" stroke-width="1.6"/>
<path d="M24.2,15.6 H29.8" stroke="#8cc0e8" stroke-width="1.6"/>
</svg>
<svg class="a" style="left:103px;top:31px;overflow:visible" width="30" height="31" viewBox="0 0 30 31">
<rect x="1.2" y="1.2" width="12.6" height="28.6" fill="#b9cde0" stroke="#3d7bc2" stroke-width="1.3"/>
<rect x="16.2" y="1.2" width="12.6" height="28.6" fill="#f2f7ee" stroke="#3d7bc2" stroke-width="1.3"/>
<path d="M1.2,5.5 H13.8 M1.2,9.5 H13.8 M1.2,13.5 H13.8 M1.2,17.5 H13.8 M1.2,21.5 H13.8 M1.2,25.5 H13.8 M16.2,5.5 H28.8 M16.2,9.5 H28.8 M16.2,13.5 H28.8 M16.2,17.5 H28.8 M16.2,21.5 H28.8 M16.2,25.5 H28.8" stroke="#3d7bc2" stroke-width="1.2"/>
<circle cx="15" cy="16" r="7.4" fill="#fff" stroke="#d9603b" stroke-width="1.7"/>
<path d="M14.4,11 V16.6 H18.6" fill="none" stroke="#5a5a5a" stroke-width="1.9"/>
</svg>
<svg class="a" style="left:150px;top:32px;overflow:visible" width="26" height="31" viewBox="0 0 26 31">
<path d="M1.4,1.4 H15.8 L22.4,7.6 V27.4 H1.4 Z" fill="url(#gDoc)" stroke="#6b7cb6" stroke-width="1.2"/>
<path d="M15.8,1.4 V7.6 H22.4" fill="#fff" stroke="#6b7cb6" stroke-width="1.2"/>
<path d="M16.5,21.5 L23,28" stroke="#404a78" stroke-width="3.6" stroke-linecap="round"/>
<path d="M19.2,24.2 L23,28" stroke="#d8952e" stroke-width="3.6" stroke-linecap="round"/>
<circle cx="12.5" cy="17.3" r="6.6" fill="#eef2fa" stroke="#6470a8" stroke-width="1"/>
<circle cx="12.5" cy="17.3" r="5" fill="url(#gBlue)" stroke="#34509a" stroke-width="1"/>
</svg>
<svg class="a" style="left:206px;top:35px;overflow:visible" width="32" height="29" viewBox="0 0 32 29">
<path d="M1.6,1.4 H25.6 V17.6 H11 L4.6,23.6 V17.6 H1.6 Z" fill="#b6c4e4" stroke="#7793bb" stroke-width="1.2" stroke-linejoin="round"/>
<path d="M3,3 H24" stroke="#e4e9f6" stroke-width="1.2"/>
<path d="M12,26 L28,10" stroke="#b46a10" stroke-width="5.2" stroke-linecap="butt"/>
<path d="M12,26 L28,10" stroke="#f2b53a" stroke-width="3.6"/>
<path d="M25.6,12.4 L30,8" stroke="#c43a30" stroke-width="5.4"/>
<path d="M24.2,13.8 L26.2,11.8" stroke="#5a76b0" stroke-width="5.4"/>
<path d="M9.8,28.2 L12.4,21.4 L16.6,25.6 Z" fill="#f6dcb0"/>
<path d="M9.8,28.2 L10.8,25.6 L12.4,27.2 Z" fill="#202a50"/>
</svg>
<svg class="a" style="left:262px;top:31px;overflow:visible" width="32" height="31" viewBox="0 0 32 31">
<path d="M5.4,1.2 H21 L27,7 V27.6 H5.4 Z" fill="url(#gDoc)" stroke="#6b7cb6" stroke-width="1.2"/>
<path d="M21,1.2 V7 H27" fill="#fff" stroke="#6b7cb6" stroke-width="1.2"/>
<rect x="1.2" y="6.2" width="13.6" height="8.8" rx="1.2" fill="#2d8a12"/>
<text x="2.6" y="13.2" font-family="Liberation Sans" font-weight="bold" font-size="7.6" textLength="10.8" lengthAdjust="spacingAndGlyphs" fill="#fff">XLS</text>
<rect x="16.2" y="16.2" width="13.4" height="13.4" rx="1" fill="#3c4a6a" stroke="#2a3450" stroke-width="0.8"/>
<rect x="19" y="17" width="8" height="5" fill="#eef2f8"/>
<rect x="24.4" y="17.8" width="1.5" height="3" fill="#2a3450"/>
<rect x="19" y="24" width="8" height="5.2" fill="#ffffff"/>
<rect x="19" y="26.6" width="8" height="2.2" fill="#5aa0dc"/>
</svg>
<svg class="a" style="left:313px;top:34px;overflow:visible" width="27" height="27" viewBox="0 0 27 27"><use href="#person" width="27" height="27" fill="#80b132"/></svg>
<svg class="a" style="left:357px;top:34px;overflow:visible" width="27" height="27" viewBox="0 0 27 27"><use href="#person" width="27" height="27" fill="#b5cbe6"/></svg>
<svg class="a" style="left:370px;top:46px;overflow:visible" width="17" height="17" viewBox="0 0 17 17"><path d="M5.4,1 H10.6 V5.4 H15 V10.6 H10.6 V15 H5.4 V10.6 H1 V5.4 H5.4 Z" fill="url(#gGreen)" stroke="#3e7a12" stroke-width="0.9"/></svg>
<svg class="a" style="left:404px;top:34px;overflow:visible" width="27" height="27" viewBox="0 0 27 27"><use href="#person" width="27" height="27" fill="#b5cbe6"/></svg>
<svg class="a" style="left:419px;top:48px;overflow:visible" width="14" height="14" viewBox="0 0 14 14"><path d="M3,3 L11,11 M11,3 L3,11" stroke="#b02820" stroke-width="4" stroke-linecap="round"/><path d="M3,3 L11,11 M11,3 L3,11" stroke="#ee6a58" stroke-width="2.2" stroke-linecap="round"/></svg>
<svg class="a" style="left:368px;top:86px;overflow:visible" width="7" height="4" viewBox="0 0 7 4"><path d="M0,0 H7 L3.5,3.5 Z" fill="#15428b"/></svg>
<svg class="a" style="left:483px;top:32px;overflow:visible" width="26" height="31" viewBox="0 0 26 31"><use href="#doc" x="0" y="0" width="23" height="27"/><use href="#bcirc" x="5.4" y="8.6" width="11" height="11"/><use href="#funnel" x="11" y="15" width="14" height="15"/></svg>
<svg class="a" style="left:565px;top:32px;overflow:visible" width="26" height="31" viewBox="0 0 26 31"><use href="#doc" x="0" y="0" width="23" height="27"/><use href="#grid" x="5" y="9" width="12" height="9"/><use href="#gcheck" x="1.8" y="11.8" width="11" height="11"/><use href="#funnel" x="11" y="15" width="14" height="15"/></svg>
<svg class="a" style="left:638px;top:32px;overflow:visible" width="26" height="31" viewBox="0 0 26 31"><use href="#doc" x="0" y="0" width="23" height="27"/><use href="#grid" x="5" y="9" width="12" height="9"/><use href="#sgear" x="1.8" y="12" width="11.5" height="11.5"/><use href="#funnel" x="11" y="15" width="14" height="15"/></svg>
<svg class="a" style="left:707px;top:32px;overflow:visible" width="26" height="31" viewBox="0 0 26 31"><use href="#doc" x="0" y="0" width="23" height="27"/><use href="#grid" x="5" y="9" width="12" height="9"/><use href="#garrow" x="1.5" y="10" width="11" height="14.5"/><use href="#funnel" x="11" y="15" width="14" height="15"/></svg>
<svg class="a" style="left:771px;top:32px;overflow:visible" width="26" height="31" viewBox="0 0 26 31"><use href="#doc" x="0" y="0" width="23" height="27"/><use href="#grid" x="5" y="9" width="12" height="9"/><use href="#rcirc" x="2" y="12.4" width="12" height="12"/><use href="#funnel" x="11" y="15" width="14" height="15"/></svg>
<svg class="a" style="left:842px;top:32px;overflow:visible" width="26" height="31" viewBox="0 0 26 31"><use href="#doc" x="0" y="0" width="23" height="27"/><use href="#person" x="3.6" y="3.2" width="14.5" height="22.8" fill="#80b132"/><use href="#funnel" x="11" y="15" width="14" height="15"/></svg>
<svg class="a" style="left:911px;top:32px;overflow:visible" width="26" height="31" viewBox="0 0 26 31"><use href="#doc" x="0" y="0" width="23" height="27"/><use href="#person" x="3.6" y="3.2" width="14.5" height="22.8" fill="#b5cbe6"/><use href="#funnel" x="11" y="15" width="14" height="15"/></svg>
<svg class="a" style="left:991px;top:32px;overflow:visible" width="26" height="31" viewBox="0 0 26 31"><use href="#doc" x="0" y="0" width="23" height="27"/><use href="#grid" x="5" y="9.5" width="12" height="9"/><use href="#warn" x="1.6" y="12.4" width="11" height="10.5"/><use href="#funnel" x="11" y="15" width="14" height="15"/></svg>
<svg class="a" style="left:1053px;top:32px;overflow:visible" width="26" height="31" viewBox="0 0 26 31"><use href="#doc" x="0" y="0" width="23" height="27"/><use href="#rcirc" x="3.6" y="9" width="12.4" height="12.4"/><use href="#funnel" x="11" y="15" width="14" height="15"/></svg>
<svg class="a" style="left:1098px;top:32px;overflow:visible" width="26" height="31" viewBox="0 0 26 31"><use href="#doc" x="0" y="0" width="23" height="27"/><use href="#gridtbl" x="3" y="9" width="16" height="13"/><circle cx="11.6" cy="15.6" r="4.6" fill="#fff" stroke="#d9603b" stroke-width="1.1"/><path d="M11.4,12.6 V15.8 H13.8" fill="none" stroke="#555" stroke-width="1"/><use href="#funnel" x="11" y="15" width="14" height="15"/></svg>
<svg class="a" style="left:1152px;top:32px;overflow:visible" width="26" height="31" viewBox="0 0 26 31"><use href="#doc" x="0" y="0" width="23" height="27"/><use href="#innerdoc" x="4.8" y="8.8" width="11.8" height="13.8"/><use href="#funnel" x="11" y="15" width="14" height="15"/></svg>
<svg class="a" style="left:1208px;top:32px;overflow:visible" width="26" height="31" viewBox="0 0 26 31"><use href="#doc" x="0" y="0" width="23" height="27"/><use href="#innerdoc" x="4.8" y="8.6" width="11.2" height="11.6"/><use href="#dollar" x="2.6" y="13.9" width="9.4" height="9.4"/><use href="#funnel" x="11" y="15" width="14" height="15"/></svg>
<svg class="a" style="left:1261px;top:32px;overflow:visible" width="26" height="31" viewBox="0 0 26 31"><use href="#doc" x="0" y="0" width="23" height="27"/><use href="#innerdoc" x="5" y="8" width="11" height="13"/><use href="#folder" x="3" y="14.6" width="9" height="9"/><use href="#funnel" x="11" y="15" width="14" height="15"/></svg>
<svg class="a" style="left:1318px;top:31px;overflow:visible" width="32" height="32" viewBox="0 0 32 32"><path d="M12.84,5.67 L13.84,1.56 L18.16,1.56 L19.16,5.67 L21.07,6.46 L24.68,4.26 L27.74,7.32 L25.54,10.93 L26.33,12.84 L30.44,13.84 L30.44,18.16 L26.33,19.16 L25.54,21.07 L27.74,24.68 L24.68,27.74 L21.07,25.54 L19.16,26.33 L18.16,30.44 L13.84,30.44 L12.84,26.33 L10.93,25.54 L7.32,27.74 L4.26,24.68 L6.46,21.07 L5.67,19.16 L1.56,18.16 L1.56,13.84 L5.67,12.84 L6.46,10.93 L4.26,7.32 L7.32,4.26 L10.93,6.46 Z" fill="url(#gGear)" stroke="#4e5566" stroke-width="1.1" stroke-linejoin="round"/><circle cx="16" cy="16" r="4.6" fill="#f8f8f8" stroke="#3e4656" stroke-width="1.1"/></svg>
<svg class="a" style="left:10px;top:192px;overflow:visible" width="16" height="16" viewBox="0 0 16 16"><use href="#bcirc" width="16" height="16" /></svg>
<svg class="a" style="left:10px;top:213px;overflow:visible" width="16" height="16" viewBox="0 0 16 16"><use href="#rcirc" width="16" height="16" /></svg>
<svg class="a" style="left:10px;top:234px;overflow:visible" width="16" height="16" viewBox="0 0 16 16"><use href="#grid" x="3.4" y="-0.4" width="13" height="10"/><use href="#gcheck" x="-0.2" y="3.6" width="12.4" height="12.4"/></svg>
<svg class="a" style="left:10px;top:255px;overflow:visible" width="16" height="16" viewBox="0 0 16 16"><use href="#grid" x="3.4" y="-0.4" width="13" height="10"/><use href="#warn" x="-0.6" y="4.4" width="13" height="11.8"/></svg>
<svg class="a" style="left:10px;top:276px;overflow:visible" width="16" height="16" viewBox="0 0 16 16"><use href="#grid" x="3.4" y="-0.4" width="13" height="10"/><use href="#sgear" x="-0.4" y="3.6" width="12.6" height="12.6"/></svg>
<svg class="a" style="left:10px;top:297px;overflow:visible" width="16" height="16" viewBox="0 0 16 16"><use href="#grid" x="3.4" y="-0.4" width="13" height="10"/><use href="#garrow" x="0.3" y="2" width="10.5" height="14"/></svg>
<svg class="a" style="left:10px;top:318px;overflow:visible" width="16" height="16" viewBox="0 0 16 16"><use href="#grid" x="3.4" y="-0.4" width="13" height="10"/><use href="#rcirc" x="-0.4" y="3.8" width="12.4" height="12.4"/></svg>
<svg class="a" style="left:10px;top:339px;overflow:visible" width="16" height="16" viewBox="0 0 16 16"><use href="#gridtbl" x="0.5" y="1.5" width="15" height="13"/><circle cx="8" cy="9.5" r="4.4" fill="#fff" stroke="#d9603b" stroke-width="1.1"/><path d="M7.8,6.8 V9.8 H10" fill="none" stroke="#555" stroke-width="1"/></svg>
<svg class="a" style="left:10px;top:386px;overflow:visible" width="14" height="16" viewBox="0 0 14 16"><use href="#lines" width="14" height="16" /></svg>
<svg class="a" style="left:10px;top:407px;overflow:visible" width="16" height="16" viewBox="0 0 16 16"><use href="#lines" x="1.5" y="0" width="14" height="16"/><path d="M3,1.5 V8.5" stroke="#e08a20" stroke-width="2.4"/><circle cx="3" cy="12" r="1.5" fill="#e08a20"/></svg>
<svg class="a" style="left:10px;top:428px;overflow:visible" width="16" height="16" viewBox="0 0 16 16"><use href="#lines" x="0" y="0" width="12.5" height="14"/><use href="#dollar" x="5" y="6" width="10" height="10"/></svg>
<svg class="a" style="left:10px;top:449px;overflow:visible" width="16" height="16" viewBox="0 0 16 16"><use href="#lines" x="1.5" y="0" width="12" height="14"/><path d="M3,1.5 V8" stroke="#e08a20" stroke-width="2.4"/><circle cx="3" cy="11" r="1.4" fill="#e08a20"/><use href="#dollar" x="5.4" y="6" width="10" height="10"/></svg>
<svg class="a" style="left:10px;top:470px;overflow:visible" width="16" height="16" viewBox="0 0 16 16"><path d="M3.5,0.6 H11.5 L14.8,3.8 V14.5 H3.5 Z" fill="#fff" stroke="#7b8cc0" stroke-width="1"/><path d="M5.5,4 H10 M5.5,6.2 H12.5 M5.5,8.4 H12.5" stroke="#9fb0d8" stroke-width="1.3"/><use href="#folder" x="0.2" y="6.8" width="9.6" height="9.2"/></svg>
<svg class="a" style="left:10px;top:518px;overflow:visible" width="16" height="14" viewBox="0 0 16 14"><use href="#person" width="16" height="14" fill="#b5cbe6"/></svg>
<svg class="a" style="left:10px;top:539px;overflow:visible" width="16" height="14" viewBox="0 0 16 14"><use href="#person" width="16" height="14" fill="#e24c3c"/></svg>
<svg class="a" style="left:10px;top:560px;overflow:visible" width="16" height="14" viewBox="0 0 16 14"><use href="#person" width="16" height="14" fill="#80b132"/></svg>
<svg class="a" style="left:164px;top:150px;overflow:visible" width="9" height="11" viewBox="0 0 9 11"><rect x="2" y="1" width="5" height="5.5" fill="#2a5aa8"/><rect x="2.9" y="2" width="1" height="4.2" fill="#dde6f6"/><rect x="1" y="6" width="7" height="1.3" fill="#2a5aa8"/><rect x="4" y="7" width="1.1" height="3.2" fill="#2a5aa8"/></svg>
<svg class="a" style="left:210px;top:223px;overflow:visible" width="16" height="16" viewBox="0 0 16 16"><use href="#bcirc" width="16" height="16" /></svg>
<svg class="a" style="left:245px;top:223px;overflow:visible" width="14" height="16" viewBox="0 0 14 16"><use href="#lines" width="14" height="16" /></svg>
<svg class="a" style="left:280px;top:223px;overflow:visible" width="14" height="15" viewBox="0 0 14 15"><use href="#person" width="14" height="15" fill="#e24c3c"/></svg>
<svg class="a" style="left:1328px;top:147px;overflow:visible" width="14" height="16" viewBox="0 0 14 16"><rect x="0.6" y="0.6" width="10" height="12.5" fill="#fff" stroke="#6b7cb6" stroke-width="1.1"/><path d="M8.5,9.5 L12.4,13.4" stroke="#d8952e" stroke-width="2.4" stroke-linecap="round"/><circle cx="6" cy="7" r="3.8" fill="url(#gBlue)" stroke="#34509a" stroke-width="0.9"/></svg>
<svg class="a" style="left:1403px;top:147px;overflow:visible" width="16" height="16" viewBox="0 0 16 16"><path d="M3.6,13.2 L11.4,5.4 A2,2 0 0 0 8.6,2.6 L2,9.2 A3.2,3.2 0 0 0 6.6,13.8 L13.6,6.8" fill="none" stroke="#3d5a90" stroke-width="1.4" stroke-linecap="round"/></svg>
<svg class="a" style="left:1890px;top:6px;overflow:visible" width="13" height="12" viewBox="0 0 13 12"><path d="M1.5,8.5 L6.5,3.2 L11.5,8.5 L9.6,10.2 L6.5,7 L3.4,10.2 Z" fill="#fff3d0" stroke="#3a3a3a" stroke-width="1.1" stroke-linejoin="round"/></svg>
<svg class="a" style="left:24px;top:4px;overflow:visible" width="24" height="17" viewBox="0 0 24 17"><rect x="1.5" y="1.5" width="12" height="13" fill="#fff" stroke="#5c5c5c" stroke-width="1.3"/><path d="M4.5,1.5 V14.5" stroke="#5c5c5c" stroke-width="1.1"/><path d="M6,3.5 H12 M6,5.5 H12 M6,7.5 H12 M6,9.5 H12 M6,11.5 H12" stroke="#5c5c5c" stroke-width="1"/><path d="M16,6.5 L18,8.5 L20,6.5 Z" fill="#9aa0aa"/></svg>
<!--/ICONS-->
<!-- red annotations -->
<div class="red" style="left:136px;top:25px;width:54px;height:66px;"></div>
<div class="rednum" style="left:192px;top:17px;">3</div>
<div class="red" style="left:0px;top:116px;width:102px;height:33px;"></div>
<div class="rednum" style="left:104px;top:102px;">1</div>
<div class="red" style="left:1317px;top:140px;width:84px;height:33px;"></div>
<div class="rednum" style="left:1401px;top:126px;">2</div>

</body></html>
